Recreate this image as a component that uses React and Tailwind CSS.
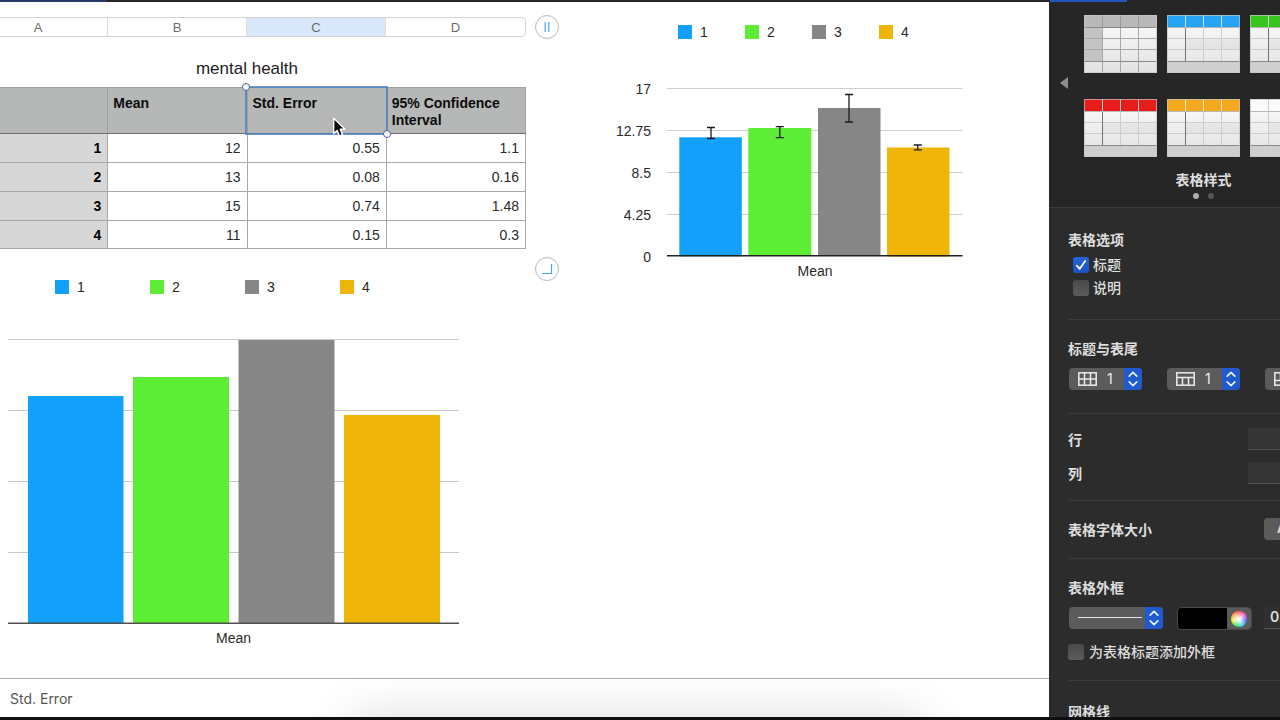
import React, { useState } from 'react';

const columns = ['A', 'B', 'C', 'D'];

const rows = [
  { id: 1, mean: '12', error: '0.55', interval: '1.1' },
  { id: 2, mean: '13', error: '0.08', interval: '0.16' },
  { id: 3, mean: '15', error: '0.74', interval: '1.48' },
  { id: 4, mean: '11', error: '0.15', interval: '0.3' },
];

const colors = ['#12a0fa', '#5ded35', '#868686', '#efb508'];

const tableStyles = [
  { name: 'Gray', header: '#b9b9b9', line: '#9c9c9c', side: true },
  { name: 'Blue', header: '#27a4f4', line: '#c8e6fa' },
  { name: 'Green', header: '#38c51f', line: '#c8f0c0' },
  { name: 'Red', header: '#e81c1a', line: '#f8c8c8' },
  { name: 'Orange', header: '#f2a91e', line: '#fae6c0' },
  { name: 'White', header: '#fafafa', line: '#c8c8c8' },
];

const Legend = ({ className, itemClass }) => (
  <ul className={`flex ${className}`}>
    {colors.map((color, i) => (
      <li key={color} className={`flex items-center gap-2 leading-[14px] ${itemClass}`}>
        <span className="size-[14px]" style={{ backgroundColor: color }} />
        {i + 1}
      </li>
    ))}
  </ul>
);

const BigChart = () => (
  <svg width="451" height="285" viewBox="0 0 451 285" role="img" aria-label="Mean">
    {[1, 72, 143, 214].map((y) => (
      <rect key={y} x="0" y={y - 1} width="451" height="1" fill="#c9c9c9" />
    ))}
    <rect x="20" y="57" width="95.5" height="228" fill={colors[0]} />
    <rect x="125" y="38" width="96" height="247" fill={colors[1]} />
    <rect x="230.5" y="1" width="96" height="284" fill={colors[2]} />
    <rect x="336" y="76" width="96" height="209" fill={colors[3]} />
    <rect x="0" y="283.5" width="451" height="1.5" fill="#505050" />
  </svg>
);

const ErrorBar = ({ x, top, bottom }) => (
  <path d={`M${x - 4} ${top}h8M${x - 4} ${bottom}h8M${x} ${top}V${bottom}`} stroke="#1c1c1c" strokeWidth="1.3" fill="none" />
);

const SmallChart = () => (
  <svg width="296" height="169" viewBox="0 0 296 169" role="img" aria-label="Mean with error bars">
    {[1, 43, 85, 127].map((y) => (
      <rect key={y} x="0" y={y - 1} width="295.5" height="1" fill="#cfcfcf" />
    ))}
    <rect x="12.3" y="49.3" width="62.5" height="119" fill={colors[0]} />
    <rect x="81.3" y="40" width="63" height="128" fill={colors[1]} />
    <rect x="151" y="20" width="62.5" height="148" fill={colors[2]} />
    <rect x="220" y="59.5" width="62.5" height="109" fill={colors[3]} />
    <rect x="0" y="167" width="295.5" height="1.5" fill="#202020" />
    <ErrorBar x={44} top={39.5} bottom={50.5} />
    <ErrorBar x={112.8} top={38.7} bottom={49.7} />
    <ErrorBar x={182} top={6.5} bottom={34} />
    <ErrorBar x={250.8} top={57} bottom={61.8} />
  </svg>
);

const Cursor = () => (
  <svg className="pointer-events-none absolute left-[84px] top-[29px] z-20" width="16" height="21" viewBox="0 0 15 20">
    <path d="M1.5 1.2v14.6l3.3-3 2.2 5.2 2.9-1.2-2.2-5.1h4.6z" fill="#0c0c0c" stroke="#fff" strokeWidth="1.3" strokeLinejoin="round" />
  </svg>
);

const DataTable = () => {
  const cell = 'border border-[#a9a9a9] pr-[6px] text-right';
  const head = 'border border-[#a0a2a1] border-b-[#707070] pl-[5px] pt-[7px] text-left align-top font-bold leading-[17px]';

  return (
    <table className="w-full table-fixed border-collapse">
      <thead>
        <tr className="h-[46px] bg-[#b6b8b7] text-[#0c0c0c]">
          <th className={head} aria-label="Row" />
          <th className={head}>Mean</th>
          <th className={`${head} relative`}>
            Std. Error
            <span className="absolute -bottom-[2px] -left-[3px] -right-[2px] -top-[2px] z-10 border-2 border-[#4b7fbd]/80">
              <span className="absolute -left-[5px] -top-[5px] size-2 rounded-full border border-[#4a5f9c] bg-white" />
              <span className="absolute -bottom-[5px] -right-[5px] size-2 rounded-full border border-[#4a5f9c] bg-white" />
            </span>
            <Cursor />
          </th>
          <th className={head}>95% Confidence Interval</th>
        </tr>
      </thead>
      <tbody>
        {rows.map((row) => (
          <tr key={row.id} className="h-[29px] last:h-7">
            <th className={`${cell} bg-[#d7d7d7] font-bold text-black`}>{row.id}</th>
            <td className={cell}>{row.mean}</td>
            <td className={cell}>{row.error}</td>
            <td className={cell}>{row.interval}</td>
          </tr>
        ))}
      </tbody>
    </table>
  );
};

const RoundButton = ({ label, children }) => (
  <button type="button" aria-label={label} className="flex size-6 shrink-0 items-center justify-center rounded-full border border-[#b8b8b8] bg-white">
    <svg width="12" height="12" viewBox="0 0 12 12" fill="none" stroke="#4aa3ee" strokeWidth="1.2">
      {children}
    </svg>
  </button>
);

const StyleThumb = ({ style }) => {
  const id = `body-${style.name}`;
  return (
    <button type="button" aria-label={style.name} className="h-[58px] w-[73px]">
      <svg width="73" height="58" viewBox="0 0 73 58">
        <defs>
          <linearGradient id={id} x1="0" y1="0" x2="0" y2="1">
            <stop offset="0" stopColor="#fbfbfb" />
            <stop offset="1" stopColor="#e2e2e2" />
          </linearGradient>
        </defs>
        <rect width="73" height="58" fill={`url(#${id})`} />
        {!style.side && <rect x="19" y="23" width="54" height="11" fill="#000" opacity="0.04" />}
        {style.side ? (
          <rect y="12" width="18" height="34" fill="#c3c3c3" />
        ) : (
          <rect y="46" width="73" height="12" fill="#cfcfcf" />
        )}
        <path d="M18.5 12v46M36.5 12v46M54.5 12v46M0 23.5h73M0 34.5h73" stroke={style.side ? '#a8a8a8' : '#cdcdcd'} />
        <path d="M0 46.5h73" stroke="#8a8a8a" />
        <rect width="73" height="12" fill={style.header} />
        <path d="M18.5 0v12M36.5 0v12M54.5 0v12" stroke={style.line} />
        <path d="M0 12.5h73" stroke={style.side ? '#8a8a8a' : '#b8b8b8'} />
        {!style.side && style.name !== 'White' && <path d="M18.5 13v33" stroke="#707070" />}
        <rect x="0.5" y="0.5" width="72" height="57" fill="none" stroke="#c4c4c4" opacity="0.7" />
      </svg>
    </button>
  );
};

const Chevrons = () => (
  <span className="pointer-events-none absolute inset-y-0 right-0 flex w-[18px] items-center justify-center rounded-r-[4px] bg-[#2159cf]">
    <svg width="12" height="18" viewBox="0 0 12 18" fill="none" stroke="#e8efff" strokeWidth="1.7" strokeLinecap="round" strokeLinejoin="round">
      <path d="M2.2 6.2 6 2.4l3.8 3.8M2.2 11.8 6 15.6l3.8-3.8" />
    </svg>
  </span>
);

const CountSelect = ({ label, children }) => (
  <div className="relative h-[22px] w-[73px] shrink-0 rounded-[4px] bg-[#5b5b5b]">
    <svg className="pointer-events-none absolute left-[9px] top-[4px]" width="19" height="14" viewBox="0 0 19 14" fill="none" stroke="#ececec" strokeWidth="1.5">
      <rect x="0.8" y="0.8" width="17.4" height="12.4" />
      {children}
    </svg>
    <select aria-label={label} defaultValue="1" className="h-full w-full appearance-none bg-transparent pl-[38px] font-['Inter',sans-serif] text-sm leading-[22px] text-[#ececec]">
      <option>0</option>
      <option>1</option>
      <option>2</option>
    </select>
    <Chevrons />
  </div>
);

const Checkbox = ({ label, checked, onChange, className }) => (
  <label className={`flex h-[23px] font-medium ${className}`}>
    <span className="relative mt-[3px] size-4">
      <input
        type="checkbox"
        checked={checked}
        onChange={(e) => onChange(e.target.checked)}
        className="block size-4 appearance-none rounded-[3px] bg-linear-to-b from-[#494949] to-[#5c5c5c] checked:from-[#2763dc] checked:to-[#1d53c4]"
      />
      {checked && (
        <svg className="pointer-events-none absolute inset-0" width="16" height="16" viewBox="0 0 16 16" fill="none" stroke="#fff" strokeWidth="1.8" strokeLinecap="round" strokeLinejoin="round">
          <path d="m3.8 8.6 3 3.2L12.2 4" />
        </svg>
      )}
    </span>
    {label}
  </label>
);

const Inspector = () => {
  const [title, setTitle] = useState(true);
  const [caption, setCaption] = useState(false);
  const [outline, setOutline] = useState(false);
  const field = 'h-[22px] w-[94px] border-b border-[#505050] bg-[#353535] px-[6px]';

  return (
    <aside className="w-[231px] shrink-0 overflow-hidden bg-[#2c2c2c] font-['Noto_Sans_CJK_SC',sans-serif] text-sm leading-5 text-[#dedede]">
      <div className="w-[309px]">
        <section className="relative flex h-[206px] flex-col items-center border-b border-[#3a3a3a] bg-[#262626] pt-[13px]">
          <button type="button" aria-label="Previous styles" className="absolute left-[11px] top-[75px]">
            <svg width="8" height="12" viewBox="0 0 8 12">
              <path d="M8 0v12L0 6z" fill="#8d8d8d" />
            </svg>
          </button>
          <div className="grid grid-cols-3 gap-x-[10px] gap-y-[26px]">
            {tableStyles.map((style) => (
              <StyleThumb key={style.name} style={style} />
            ))}
          </div>
          <h2 className="mt-3 font-bold">表格样式</h2>
          <div className="mt-1 flex gap-[9px]">
            <span className="size-[6px] rounded-full bg-[#b0b0b0]" />
            <span className="size-[6px] rounded-full bg-[#565656]" />
          </div>
        </section>

        <div className="divide-y divide-[#3b3b3b] pl-[19px] pr-4">
          <section className="h-[112px] pt-[21px]">
            <h3 className="font-bold">表格选项</h3>
            <div className="mt-[5px]">
              <Checkbox label="标题" checked={title} onChange={setTitle} className="gap-1 pl-[5px]" />
              <Checkbox label="说明" checked={caption} onChange={setCaption} className="gap-1 pl-[5px]" />
            </div>
          </section>

          <section className="h-[94px] pt-[18px]">
            <h3 className="font-bold">标题与表尾</h3>
            <div className="mt-[10px] flex gap-[25px] pl-px">
              <CountSelect label="标题列">
                <path d="M6.5 1v12M12.5 1v12M1 7h17" />
              </CountSelect>
              <CountSelect label="标题行">
                <path d="M1 5.5h17M6.5 5.5V13M12.5 5.5V13" />
              </CountSelect>
              <CountSelect label="表尾行">
                <path d="M1 8.5h17M6.5 1v7.5M12.5 1v7.5" />
              </CountSelect>
            </div>
          </section>

          <section className="flex h-[87px] flex-col gap-3 pt-[14px] font-bold">
            <label className="flex h-[22px] items-center justify-between">
              行
              <input className={field} />
            </label>
            <label className="flex h-[22px] items-center justify-between">
              列
              <input className={field} />
            </label>
          </section>

          <section className="flex h-[58px] items-center justify-between pb-px font-bold">
            <h3>表格字体大小</h3>
            <button type="button" aria-label="缩小字体" className="h-[22px] w-[78px] rounded-[4px] bg-[#5b5b5b] pl-[13px] text-left font-['Inter',sans-serif] text-xs">
              A
            </button>
          </section>

          <section className="h-[122px] pt-[18px]">
            <h3 className="font-bold">表格外框</h3>
            <div className="mt-[10px] flex pl-px">
              <div className="relative h-[22px] w-[94px] shrink-0 rounded-[4px] bg-[#5b5b5b]">
                <select aria-label="线条样式" className="h-full w-full appearance-none bg-transparent">
                  <option aria-label="实线" />
                </select>
                <span className="pointer-events-none absolute left-[9px] top-[10px] h-px w-[64px] bg-[#e4e4e4]" />
                <Chevrons />
              </div>
              <button type="button" aria-label="外框颜色" className="ml-[14px] flex h-[23px] w-[75px] shrink-0 items-center justify-end overflow-hidden rounded-[4px] border border-[#484848] bg-black">
                <span className="flex h-full w-6 items-center justify-center bg-[#5b5b5b]">
                  <span className="size-4 rounded-full bg-[radial-gradient(circle,#fff_10%,transparent_65%),conic-gradient(#ff5a5a,#ff50d8,#5b6cff,#43d3ff,#41e85c,#e4f04a,#ff9a45,#ff5a5a)]" />
                </span>
              </button>
              <input aria-label="外框宽度" defaultValue="0.35 磅" className="ml-3 h-[22px] w-[77px] shrink-0 border-b border-[#505050] bg-[#303030] px-[6px] font-['Inter',sans-serif] text-sm font-semibold" />
            </div>
            <Checkbox label="为表格标题添加外框" checked={outline} onChange={setOutline} className="mt-[11px] gap-[5px]" />
          </section>

          <section className="pt-5">
            <h3 className="font-bold">网格线</h3>
          </section>
        </div>
      </div>
    </aside>
  );
};

export default function App() {
  return (
    <div className="flex h-screen flex-col overflow-hidden bg-white font-['Liberation_Sans',sans-serif] text-sm text-[#2a2a2a]">
      <div className="flex h-[2px] shrink-0 justify-between bg-[#2a2527]">
        <span className="w-[107px] bg-[#233a66]" />
        <span className="mr-[153px] w-[77px] bg-[#2257bd]" />
      </div>

      <div className="flex min-h-0 flex-1">
        <div className="flex min-w-0 flex-1 flex-col">
          <main className="flex min-h-0 flex-1 overflow-hidden">
            <div className="w-[559px] shrink-0 pt-[13px]">
              <div className="-ml-8 flex items-center gap-[9px]">
                <div className="grid h-5 w-[558px] grid-cols-4 divide-x divide-[#dcdcdc] overflow-hidden rounded-[4px] border border-[#d4d4d4] text-[13px] leading-[19px] text-[#6c6c6c]">
                  {columns.map((name) => (
                    <span key={name} className={name === 'C' ? 'bg-[#d8e8fa] text-center' : 'text-center'}>
                      {name}
                    </span>
                  ))}
                </div>
                <RoundButton label="Add column">
                  <path d="M4.2 1v10M7.8 1v10" />
                </RoundButton>
              </div>

              <div className="-ml-8 mt-5 w-[558px]">
                <h1 className="mb-2 text-center text-[17px] leading-5 text-[#1c1c1c]">mental health</h1>
                <DataTable />
              </div>

              <div className="mt-2 flex justify-end">
                <RoundButton label="Resize table">
                  <path d="M10.5 1v9.5H1" />
                </RoundButton>
              </div>

              <Legend className="-mt-px pl-[55px]" itemClass="w-[95px]" />
              <figure className="ml-2 mt-[45px] w-[451px]">
                <BigChart />
                <figcaption className="mt-1 text-center leading-5">Mean</figcaption>
              </figure>
            </div>

            <div className="pt-[23px]">
              <Legend className="pl-[119px]" itemClass="w-[67px]" />
              <div className="mt-10 flex gap-4">
                <ol className="flex w-[92px] flex-col gap-[22px] text-right leading-5">
                  <li>17</li>
                  <li>12.75</li>
                  <li>8.5</li>
                  <li>4.25</li>
                  <li>0</li>
                </ol>
                <figure className="pt-[9px]">
                  <SmallChart />
                  <figcaption className="mt-1 text-center leading-5">Mean</figcaption>
                </figure>
              </div>
            </div>
          </main>

          <footer className="relative flex h-[39px] shrink-0 items-center overflow-hidden border-t border-[#b0b0b0] px-[10px] pt-px font-['Inter',sans-serif] text-[#555]">
            Std. Error
            <span className="absolute left-1/3 right-[12%] top-full h-20 shadow-[0_0_48px_rgba(0,0,0,0.14)]" />
          </footer>
        </div>

        <Inspector />
      </div>

      <div className="h-[3px] shrink-0 bg-[#0f0f0f]" />
    </div>
  );
}
